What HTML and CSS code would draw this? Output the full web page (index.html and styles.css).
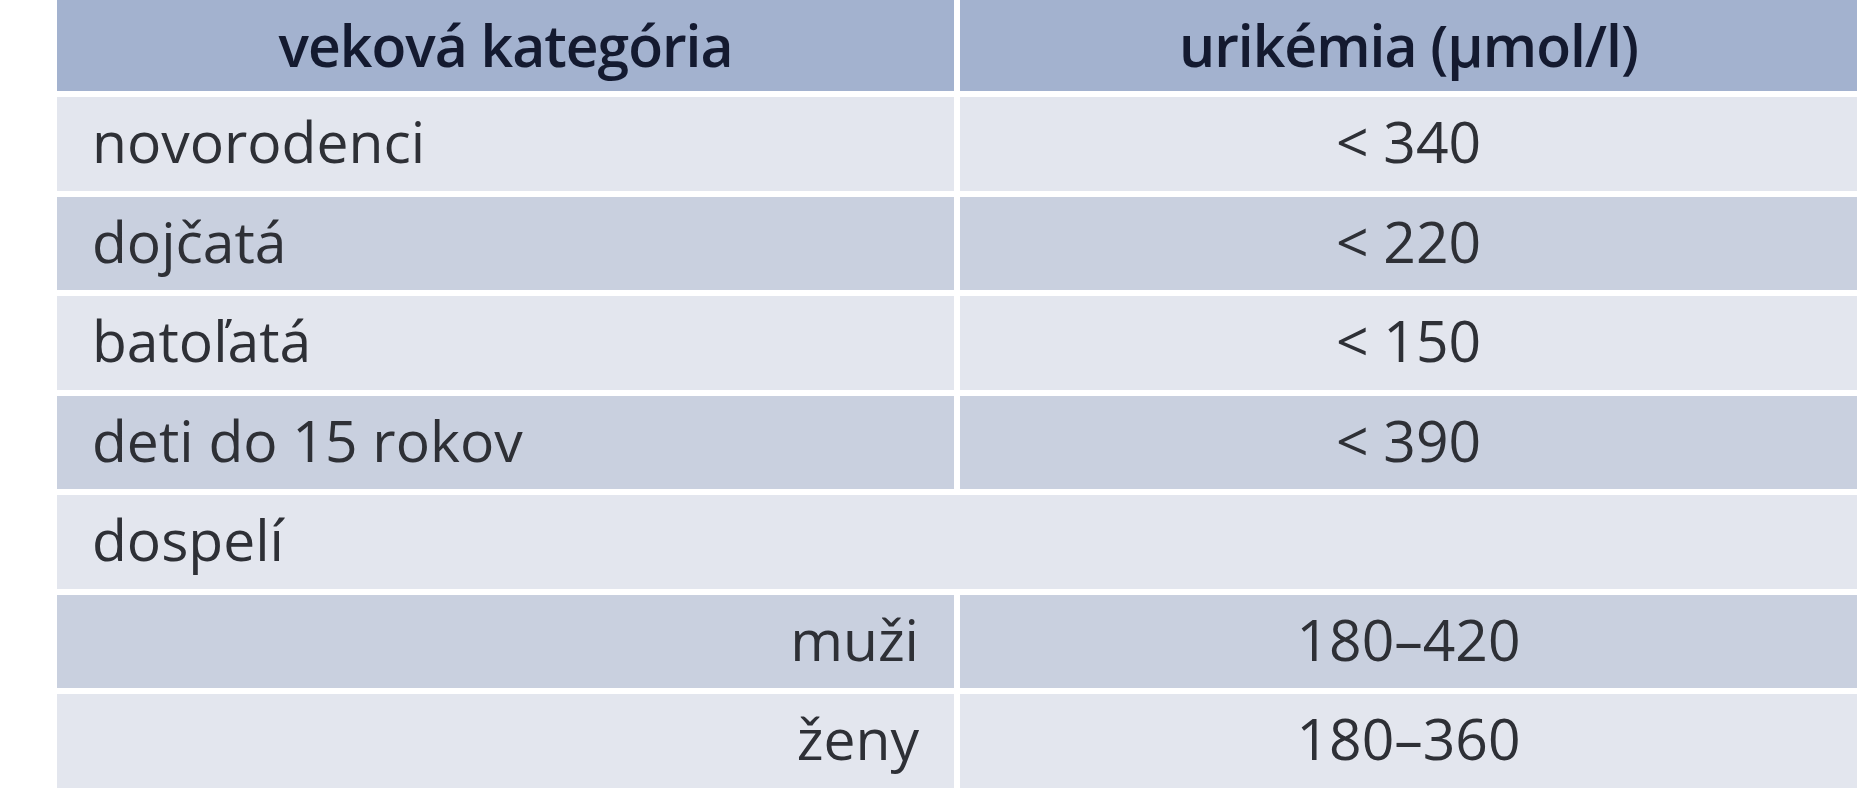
FILE: index.html
```html
<!DOCTYPE html>
<html lang="sk">
<head>
<meta charset="utf-8">
<title>Urikémia</title>
<link rel="stylesheet" href="styles.css">
</head>
<body>
<div class="table">
  <div class="cell head">veková kategória</div>
  <div class="cell head">urikémia (μmol/l)</div>

  <div class="cell light">novorodenci</div>
  <div class="cell light center">&lt; 340</div>

  <div class="cell dark">dojčatá</div>
  <div class="cell dark center">&lt; 220</div>

  <div class="cell light">batoľatá</div>
  <div class="cell light center">&lt; 150</div>

  <div class="cell dark">deti do 15 rokov</div>
  <div class="cell dark center">&lt; 390</div>

  <div class="cell light span">dospelí</div>

  <div class="cell dark right">muži</div>
  <div class="cell dark center">180–420</div>

  <div class="cell light right">ženy</div>
  <div class="cell light center">180–360</div>
</div>
</body>
</html>
```

FILE: styles.css
```css
html, body {
  margin: 0;
  padding: 0;
  background: #ffffff;
}

body {
  font-family: "Open Sans", "Noto Sans", sans-serif;
}

.table {
  display: grid;
  grid-template-columns: 1fr 1fr;
  grid-template-rows: 91px;
  grid-auto-rows: 93.5px;
  gap: 6px;
  width: 1800px;
  margin-left: 57px;
}

.cell {
  display: flex;
  align-items: center;
  padding: 0 35px 4px 35px;
  font-size: 57px;
  line-height: 1;
  color: #2e3036;
  white-space: nowrap;
}

.head {
  justify-content: center;
  background: #a3b2cf;
  color: #141a30;
  font-weight: 600;
  padding-bottom: 0;
  letter-spacing: -1px;
}

.light {
  background: #e3e6ee;
}

.dark {
  background: #c9d0df;
}

.center {
  justify-content: center;
}

.right {
  justify-content: flex-end;
}

.span {
  grid-column: 1 / span 2;
}
```
